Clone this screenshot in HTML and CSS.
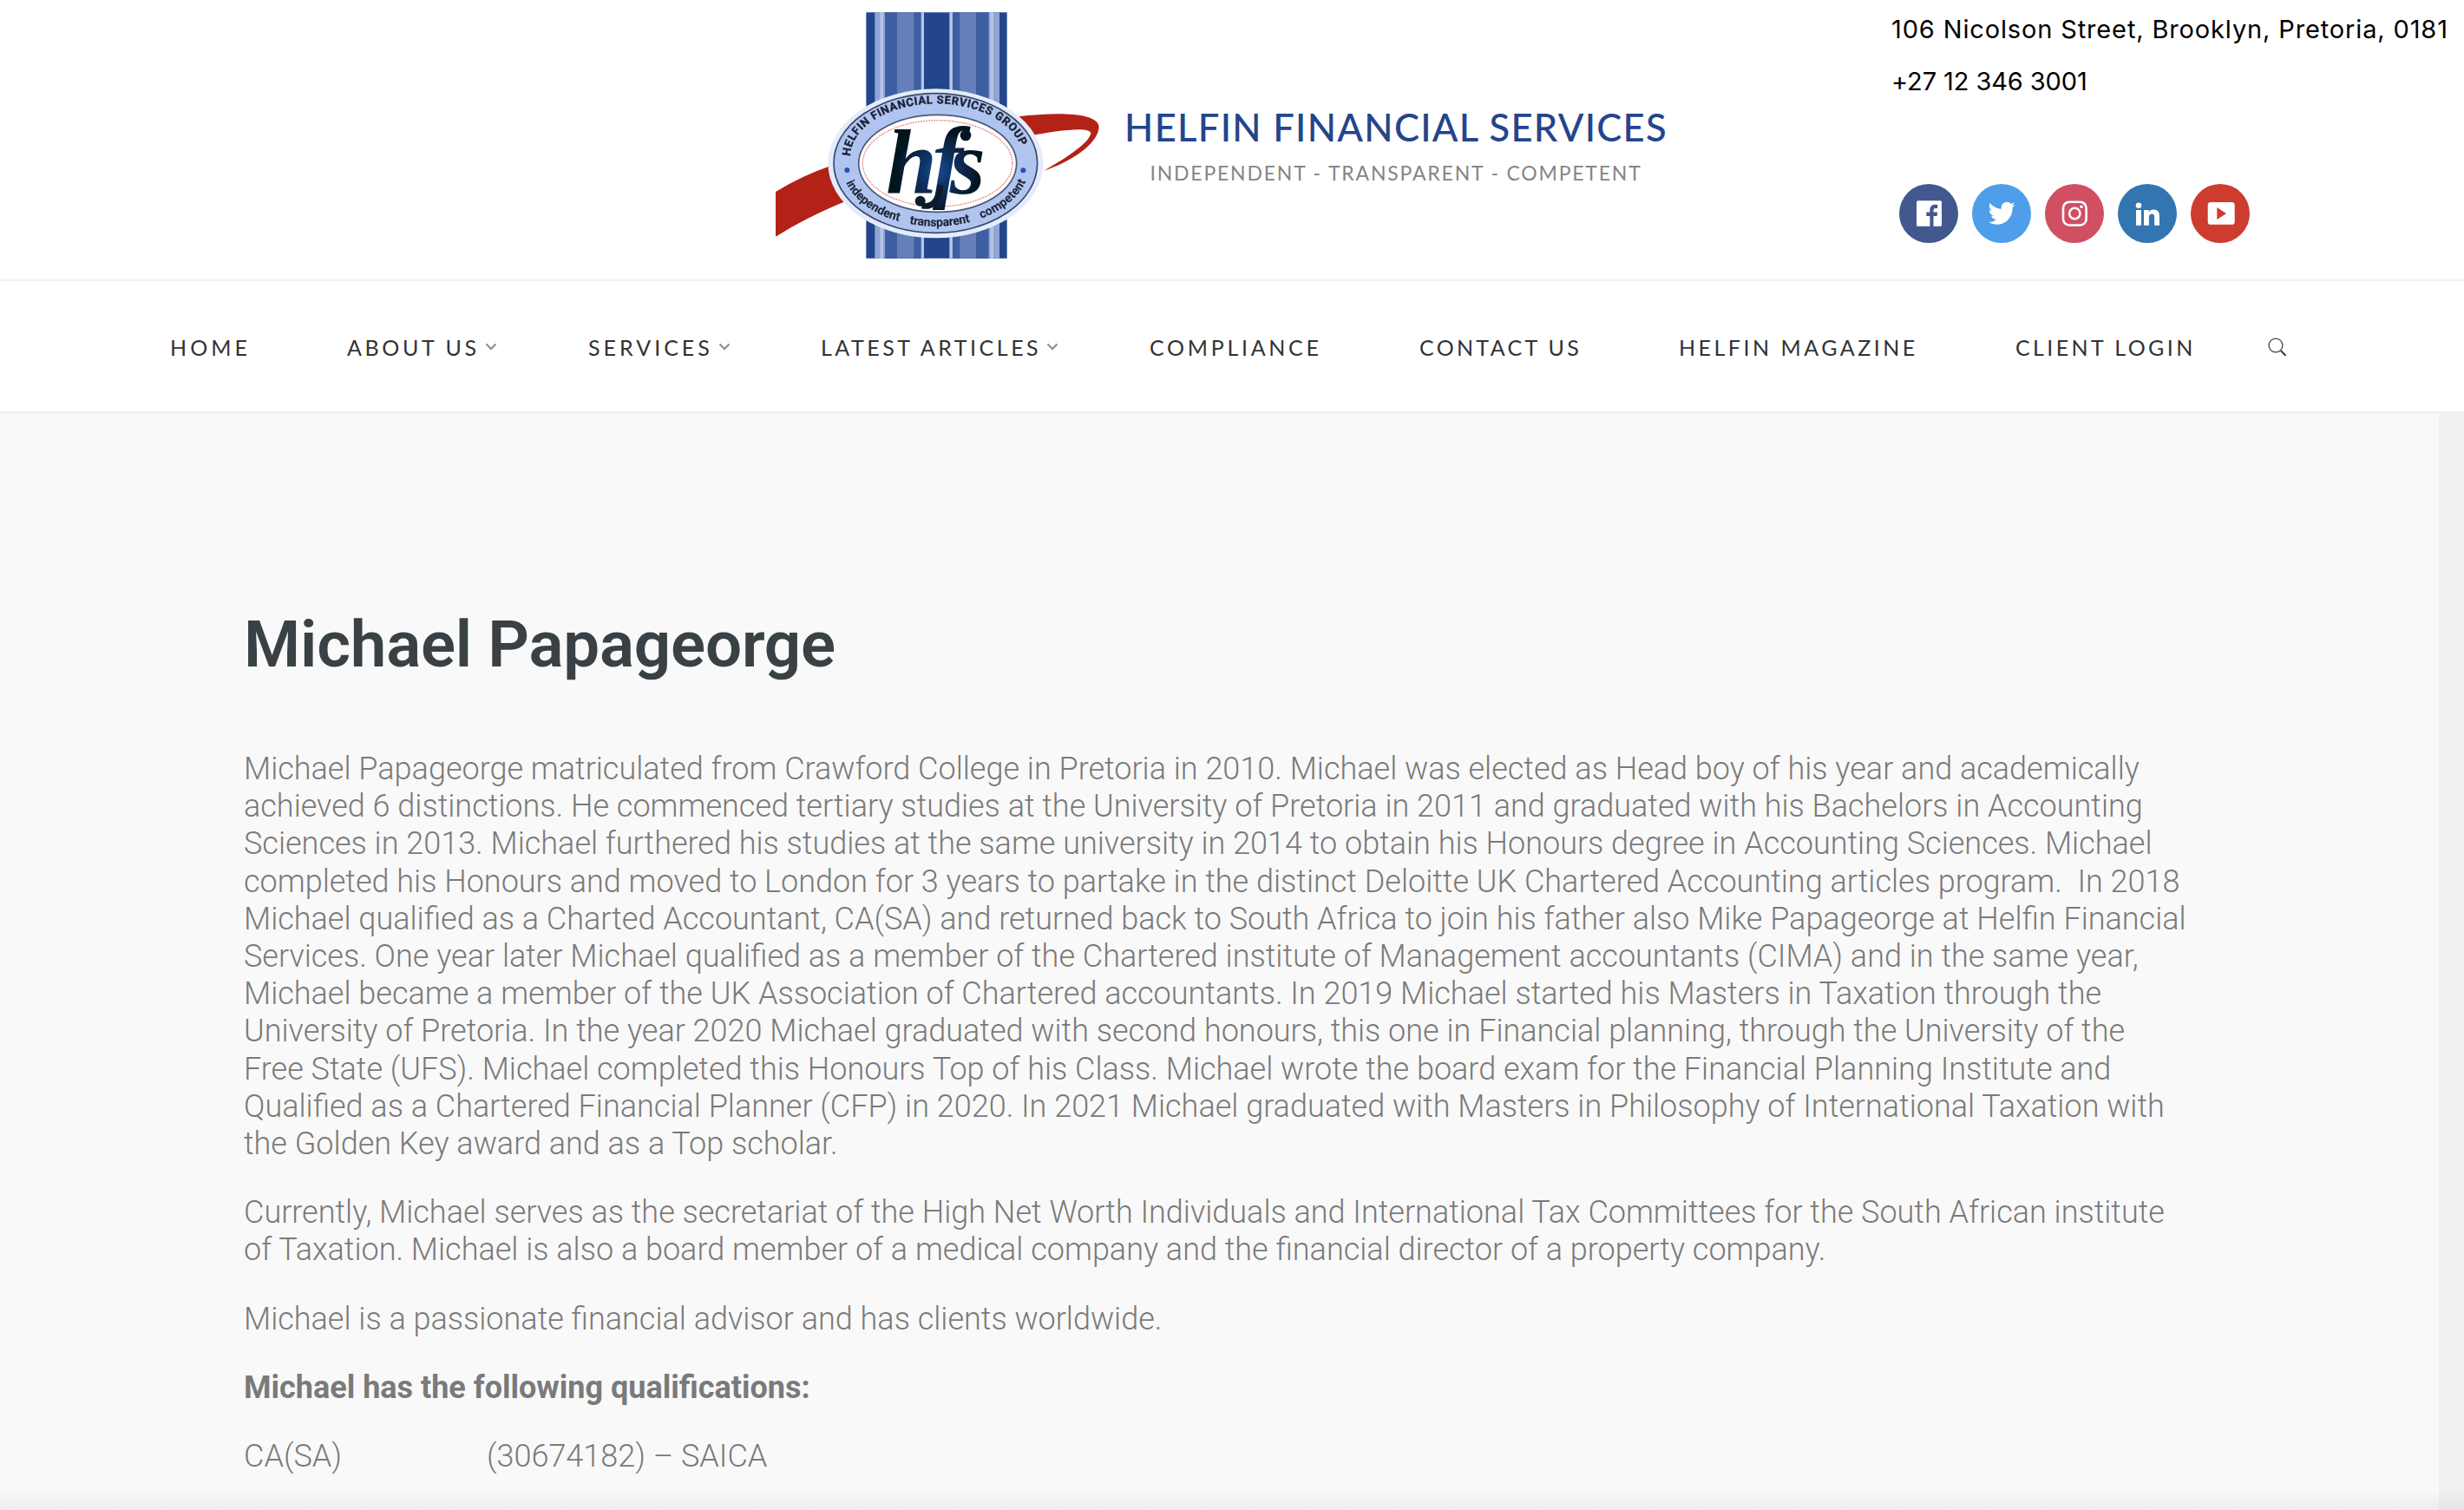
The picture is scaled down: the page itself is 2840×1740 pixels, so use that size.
FILE: index.html
```html
<!DOCTYPE html>
<html lang="en">
<head>
<meta charset="utf-8">
<title>Michael Papageorge – Helfin Financial Services</title>
<link rel="stylesheet" href="styles.css">
</head>
<body>
<header class="masthead">
  <svg class="logo" viewBox="0 0 1200 960" role="img" aria-label="Helfin Financial Services Group">
    <defs>
      <radialGradient id="ink" gradientUnits="userSpaceOnUse" cx="600" cy="590" r="150">
        <stop offset="0" stop-color="#174a94"/><stop offset=".45" stop-color="#0d2f5c"/><stop offset="1" stop-color="#04131c"/>
      </radialGradient>
      <path id="arc-top" d="M300 556A297 184 0 0 1 894 556"/>
      <path id="arc-bottom" d="M278 613A325 217 0 0 0 912 613"/>
      <filter id="soft"><feGaussianBlur stdDeviation="1.4"/></filter>
    </defs>
    <g filter="url(#soft)">
      <path fill="#24458c" d="M355 43h487v850H355z"/>
      <path fill="#8fa5d3" d="M385 43h35v850h-35zM778 43h38v850h-38z"/>
      <path fill="#b3c4e6" d="M403 43h11v850h-11zM784 43h11v850h-11z"/>
      <path fill="#3c5ea2" d="M420 43h125v850H420zM655 43h123v850H655z"/>
      <path fill="#667fba" d="M462 43h58v850h-58zM679 43h56v850h-56z"/>
      <path fill="#b3c4e6" d="M545 43h10v850h-10zM643 43h11v850h-11z"/>
      <path fill="#b32018" d="M42 663Q130 608 235 572L285 695Q150 750 42 818z"/>
      <path fill="#b32018" d="M880 403C1000 388 1160 385 1160 440C1155 500 1060 560 970 590C1050 545 1130 490 1132 460C1125 435 1000 455 930 468z"/>
      <ellipse cx="595" cy="565" rx="372" ry="258" fill="#e3ecfb"/>
      <ellipse cx="595" cy="564" rx="352" ry="241" fill="#b0c4f0" stroke="#3a4668" stroke-width="5"/>
      <ellipse cx="602" cy="565" rx="273" ry="168" fill="#fff" stroke="#4b5878" stroke-width="5"/>
      <ellipse cx="602" cy="565" rx="259" ry="149" fill="none" stroke="#e58d88" stroke-width="4" stroke-dasharray="6 3"/>
      <circle cx="289" cy="588" r="9" fill="#2a4fb0"/><circle cx="898" cy="589" r="9" fill="#2a4fb0"/>
      <g class="ring-caps" transform="translate(0 -14)"><text><textPath href="#arc-top" startOffset="2" textLength="726">HELFIN FINANCIAL SERVICES GROUP</textPath></text></g>
      <g class="ring-lower">
        <text><textPath href="#arc-bottom" startOffset="20" textLength="232">independent</textPath></text>
        <text><textPath href="#arc-bottom" startOffset="290" textLength="212">transparent</textPath></text>
        <text><textPath href="#arc-bottom" startOffset="542" textLength="205">competent</textPath></text>
      </g>
      <g class="monogram"><text x="424" y="670">h</text><text x="584" y="656">f</text><text x="644" y="670">s</text></g>
      <path d="M612 640C604 700 580 718 548 711" fill="none" stroke="#071a2a" stroke-width="20"/>
      <circle cx="542" cy="695" r="18" fill="#071a2a"/><circle cx="699" cy="468" r="19" fill="#061723"/>
    </g>
  </svg>
  <div class="brand">
    <div class="brand-name">HELFIN FINANCIAL SERVICES</div>
    <div class="brand-tag">INDEPENDENT - TRANSPARENT - COMPETENT</div>
  </div>
  <div class="contact">
    <div class="address">106 Nicolson Street, Brooklyn, Pretoria, 0181</div>
    <div class="phone">+27 12 346 3001</div>
    <div class="social">
      <svg viewBox="0 0 68 68"><circle cx="34" cy="34" r="34" fill="#43588f"/><rect x="20" y="19.3" width="29" height="29.4" rx="1.5" fill="#fff"/><path fill="#43588f" d="M35.4 49V37h-4.1v-4.4h4.1v-2.8c0-4 2.3-6.1 5.9-6.1h2.9v4.2h-2.1c-1.9 0-2.6.8-2.6 2.3v2.4h4.6l-.5 4.4h-4.1v12z"/></svg>
      <svg viewBox="0 0 68 68"><circle cx="34" cy="34" r="34" fill="#4e9eea"/><path fill="#fff" transform="translate(18.6 17.8) scale(1.3 1.33)" d="M23.95 4.57a10 10 0 0 1-2.82.77 4.96 4.96 0 0 0 2.16-2.72c-.95.55-2 .96-3.13 1.18a4.92 4.92 0 0 0-8.38 4.48C7.69 8.1 4.07 6.13 1.64 3.16a4.92 4.92 0 0 0 1.52 6.57 4.9 4.9 0 0 1-2.23-.61v.06a4.92 4.92 0 0 0 3.95 4.83 5 5 0 0 1-2.21.08 4.94 4.94 0 0 0 4.6 3.42A9.87 9.87 0 0 1 0 19.54a13.99 13.99 0 0 0 7.55 2.21c9.05 0 14-7.5 14-13.98 0-.21 0-.42-.02-.63a9.94 9.94 0 0 0 2.42-2.57z"/></svg>
      <svg viewBox="0 0 68 68"><circle cx="34" cy="34" r="34" fill="#d04f63"/><g fill="none" stroke="#fff" stroke-width="2.6"><rect x="21" y="20.7" width="26.6" height="26.8" rx="7"/><circle cx="34.3" cy="34" r="6.2"/></g><circle cx="42" cy="26.3" r="1.8" fill="#fff"/></svg>
      <svg viewBox="0 0 68 68"><circle cx="34" cy="34" r="34" fill="#3375b1"/><circle cx="24" cy="24.8" r="3.3" fill="#fff"/><path fill="#fff" d="M21 30h6v17.8h-6zM30 30h5.7v2.4c1-1.7 2.9-2.9 5.5-2.9 5.2 0 6.8 3.2 6.8 8.2v10.1h-5.8v-9.2c0-2.6-.6-4.2-2.9-4.2-2.5 0-3.4 1.7-3.4 4.3v9.1H30z"/></svg>
      <svg viewBox="0 0 68 68"><circle cx="34" cy="34" r="34" fill="#cd3c2e"/><rect x="19.7" y="21" width="31" height="25.8" rx="3.4" fill="#fff"/><path fill="#cd3c2e" d="M30.3 27L41 34l-10.7 7z"/></svg>
    </div>
  </div>
</header>
<nav class="menu">
  <a class="home">HOME</a>
  <a class="about">ABOUT US<svg class="caret" viewBox="0 0 14 10"><path d="M1.5 1.5L7 7l5.500-5.500"/></svg></a>
  <a class="services">SERVICES<svg class="caret" viewBox="0 0 14 10"><path d="M1.5 1.5L7 7l5.500-5.500"/></svg></a>
  <a class="articles">LATEST ARTICLES<svg class="caret" viewBox="0 0 14 10"><path d="M1.5 1.5L7 7l5.500-5.500"/></svg></a>
  <a class="compliance">COMPLIANCE</a>
  <a class="contact-us">CONTACT US</a>
  <a class="magazine">HELFIN MAGAZINE</a>
  <a class="login">CLIENT LOGIN</a>
  <svg class="search" viewBox="0 0 24 24"><circle cx="10" cy="10" r="7.9"/><path class="handle" d="M15.800 16L21.500 21.700"/></svg>
</nav>
<main class="page">
  <article class="bio">
    <h1>Michael Papageorge</h1>
    <p>Michael Papageorge matriculated from Crawford College in Pretoria in 2010. Michael was elected as Head boy of his year and academically<br>achieved 6 distinctions. He commenced tertiary studies at the University of Pretoria in 2011 and graduated with his Bachelors in Accounting<br>Sciences in 2013. Michael furthered his studies at the same university in 2014 to obtain his Honours degree in Accounting Sciences. Michael<br>completed his Honours and moved to London for 3 years to partake in the distinct Deloitte UK Chartered Accounting articles program.&nbsp; In 2018<br>Michael qualified as a Charted Accountant, CA(SA) and returned back to South Africa to join his father also Mike Papageorge at Helfin Financial<br>Services. One year later Michael qualified as a member of the Chartered institute of Management accountants (CIMA) and in the same year,<br>Michael became a member of the UK Association of Chartered accountants. In 2019 Michael started his Masters in Taxation through the<br>University of Pretoria. In the year 2020 Michael graduated with second honours, this one in Financial planning, through the University of the<br>Free State (UFS). Michael completed this Honours Top of his Class. Michael wrote the board exam for the Financial Planning Institute and<br>Qualified as a Chartered Financial Planner (CFP) in 2020. In 2021 Michael graduated with Masters in Philosophy of International Taxation with<br>the Golden Key award and as a Top scholar.</p>
    <p>Currently, Michael serves as the secretariat of the High Net Worth Individuals and International Tax Committees for the South African institute<br>of Taxation. Michael is also a board member of a medical company and the financial director of a property company.</p>
    <p>Michael is a passionate financial advisor and has clients worldwide.</p>
    <p><strong>Michael has the following qualifications:</strong></p>
    <p class="qualification"><span>CA(SA)</span><span>(30674182) – SAICA</span></p>
  </article>
</main>
<div class="fade"></div>
</body>
</html>
```
FILE: styles.css
```css
* { box-sizing: border-box; }
body {
  margin: 0;
  height: 1740px;
  display: flex;
  flex-direction: column;
  overflow: hidden;
  background: #fff;
  color: #7a7a7a;
  font-family: Roboto, sans-serif;
}

/* Masthead */
.masthead {
  flex: none;
  height: 324px;
  display: flex;
  align-items: flex-start;
  padding-left: 880px;
  border-bottom: 2px solid #f1f1f1;
}
.logo { flex: none; width: 400px; height: 320px; }
.ring-caps { font: 700 39px Roboto, sans-serif; fill: #1c2334; stroke: #1c2334; stroke-width: 1.2px; }
.ring-lower { font: 600 41px Roboto, sans-serif; fill: #1c2334; stroke: #1c2334; stroke-width: .8px; }
.monogram { font: italic 700 316px "Liberation Serif", serif; fill: url(#ink); }
.brand {
  width: 626px;
  margin-left: 16px;
  padding-top: 120px;
  text-align: center;
  white-space: nowrap;
  font-family: Lato, sans-serif;
}
.brand-name {
  font-size: 43.5px;
  font-weight: 500;
  line-height: 52px;
  letter-spacing: 1.3px;
  color: #24458c;
}
.brand-tag {
  margin-top: 13px;
  font-size: 23px;
  line-height: 28px;
  letter-spacing: 1.8px;
  color: #858585;
}
.contact {
  width: 660px;
  margin-left: auto;
  padding-top: 4px;
  color: #000;
  font: 29px/60px Inter, sans-serif;
  white-space: nowrap;
}
.address { letter-spacing: .86px; }
.phone { letter-spacing: -.1px; }
.social { display: flex; gap: 16px; margin: 88px 0 0 9px; }
.social svg { width: 68px; height: 68px; }

/* Menu */
.menu {
  flex: none;
  height: 152px;
  display: grid;
  grid-template-columns: 204px 278px 268px 379px 311px 299px 388px 289px 24px;
  align-items: center;
  padding-left: 196px;
  padding-top: 1px;
  border-bottom: 2px solid #f1f1f1;
  color: #333;
  font: 25px/30px Lato, sans-serif;
  white-space: nowrap;
}
.home { letter-spacing: 4.1px; }
.about { letter-spacing: 3.6px; }
.services { letter-spacing: 4px; }
.articles { letter-spacing: 3.5px; }
.compliance { letter-spacing: 3.7px; }
.contact-us { letter-spacing: 3.3px; }
.magazine { letter-spacing: 3.5px; }
.login { letter-spacing: 3.4px; }
.caret { width: 14px; height: 10px; margin: 0 0 5px 6px; }
.caret path { fill: none; stroke: #8c8c8c; stroke-width: 2; }
.search { width: 24px; height: 24px; margin-left: 1px; fill: none; stroke: #444; stroke-width: 1.3; }
.search .handle { stroke-width: 2.2; }

/* Article */
.page {
  flex: 1;
  min-height: 0;
  padding: 222px 0 0 281px;
  background: #f9f9f9;
  border-right: 29px solid #f1f1f1;
}
h1 {
  margin: 0 0 77px;
  color: #3a4145;
  font-size: 74.5px;
  font-weight: 600;
  line-height: 90px;
  letter-spacing: -.2px;
}
p {
  margin: 0 0 36px;
  font-size: 36px;
  font-weight: 300;
  line-height: 43.2px;
  white-space: nowrap;
}
strong { font-weight: 700; }
.qualification { display: grid; grid-template-columns: 280px auto; }

/* Shade along the lower window edge */
.fade {
  position: absolute;
  left: 0;
  right: 0;
  top: 1716px;
  height: 24px;
  background: linear-gradient(rgba(0, 0, 0, 0), rgba(0, 0, 0, .05));
}
```
